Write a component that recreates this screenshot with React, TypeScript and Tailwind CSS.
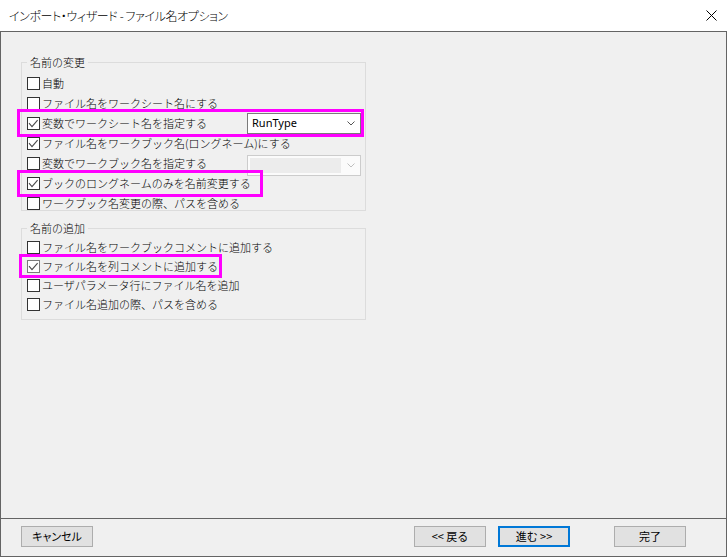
import React from "react";

const FONT = "[font-family:'Noto_Sans_CJK_JP','Noto_Sans',sans-serif]";

function Check({ checked, light }: { checked?: boolean; light?: boolean }) {
  return (
    <span
      className={`mt-[3px] w-[13px] h-[13px] shrink-0 border ${light ? "border-[#7a7a7a]" : "border-[#333333]"} bg-white flex items-center justify-center`}
    >
      {checked && (
        <svg width="11" height="11" viewBox="0 0 11 11">
          <path d="M1 5.2 L4 8.6 L9.6 2.2" fill="none" stroke="#4a4a4a" strokeWidth="1.1" />
        </svg>
      )}
    </span>
  );
}

function Row({
  checked,
  label,
  h = "h-[20px]",
  light,
  children,
}: {
  checked?: boolean;
  label: string;
  h?: string;
  light?: boolean;
  children?: React.ReactNode;
}) {
  return (
    <div className={`flex items-start ${h}`}>
      <Check checked={checked} light={light} />
      <span className="ml-[2px] text-[11px] leading-[18px] font-light text-black whitespace-nowrap">{label}</span>
      {children}
    </div>
  );
}

function Chevron({ color }: { color: string }) {
  return (
    <svg width="8" height="5" viewBox="0 0 8 5">
      <path d="M0.5 0.5 L4 4 L7.5 0.5" fill="none" stroke={color} strokeWidth="1" />
    </svg>
  );
}

export default function App() {
  return (
    <div className={`relative w-[727px] h-[557px] bg-[#f0f0f0] overflow-hidden ${FONT}`}>
      {/* Title bar */}
      <div className="h-[31px] bg-white flex items-center justify-between pl-[9px] pr-[10px]">
        <span className="text-[12px] font-light text-black [font-feature-settings:'palt'] tracking-[-0.4px]">
          インポート・ウィザード - ファイル名オプション
        </span>
        <svg width="11" height="11" viewBox="0 0 11 11" className="mt-[-1px]">
          <path d="M0.5 0.5 L10.5 10.5 M10.5 0.5 L0.5 10.5" stroke="#000" strokeWidth="1" fill="none" />
        </svg>
      </div>

      {/* Frame */}
      <div className="h-[526px] border border-[#646464] flex flex-col">
        {/* Main */}
        <div className="h-[487px] border-b border-[#646464] pl-[20px] pt-[23px] flex flex-col">
          <fieldset className="w-[345px] h-[156px] border border-[#dcdcdc] pl-[5px] pr-[4px] pt-[5px] flex flex-col">
            <legend className="px-[3px] text-[11px] leading-[14px] font-light text-black">名前の変更</legend>
            <Row label="自動" />
            <Row label="ファイル名をワークシート名にする" />
            <Row checked label="変数でワークシート名を指定する">
              <div className="ml-auto mt-[-1px] w-[114px] h-[21px] bg-white border border-[#7a7a7a] flex items-center justify-between pl-[4px] pr-[5px]">
                <span className="text-[11px] [font-family:'Noto_Sans',sans-serif] text-black">RunType</span>
                <Chevron color="#555555" />
              </div>
            </Row>
            <Row checked label="ファイル名をワークブック名(ロングネーム)にする" />
            <Row label="変数でワークブック名を指定する">
              <div className="ml-auto mt-[1px] w-[114px] h-[21px] bg-[#fbfbfb] border border-[#cccccc] flex items-center justify-between pl-[2px] pr-[5px]">
                <div className="w-[91px] h-[15px] bg-[#ececec]" />
                <Chevron color="#bfbfbf" />
              </div>
            </Row>
            <Row checked label="ブックのロングネームのみを名前変更する" />
            <Row label="ワークブック名変更の際、パスを含める" />
          </fieldset>

          <fieldset className="mt-[10px] w-[345px] h-[99px] border border-[#dcdcdc] pl-[5px] pr-[4px] pt-[3px] flex flex-col">
            <legend className="px-[3px] text-[11px] leading-[14px] font-light text-black">名前の追加</legend>
            <Row h="h-[19px]" label="ファイル名をワークブックコメントに追加する" />
            <Row h="h-[19px]" checked light label="ファイル名を列コメントに追加する" />
            <Row h="h-[19px]" label="ユーザパラメータ行にファイル名を追加" />
            <Row h="h-[19px]" label="ファイル名追加の際、パスを含める" />
          </fieldset>
        </div>

        {/* Footer */}
        <div className="flex-1 flex items-start pt-[7px] pl-[20px] pr-[40px]">
          <button className="w-[72px] h-[21px] bg-[#e1e1e1] border border-[#adadad] text-[11px] text-black flex items-center justify-center [font-feature-settings:'palt']">
            キャンセル
          </button>
          <div className="flex-1" />
          <button className="w-[72px] h-[21px] bg-[#e1e1e1] border border-[#adadad] text-[11px] text-black flex items-center justify-center">
            &lt;&lt; 戻る
          </button>
          <button className="ml-[12px] w-[72px] h-[21px] bg-[#e1e1e1] border-2 border-[#0078d7] text-[11px] text-black flex items-center justify-center">
            進む &gt;&gt;
          </button>
          <button className="ml-[44px] w-[72px] h-[21px] bg-[#e1e1e1] border border-[#adadad] text-[11px] text-black flex items-center justify-center">
            完了
          </button>
        </div>
      </div>

      {/* Annotation highlights */}
      <div className="absolute left-[17px] top-[109px] w-[347px] h-[28px] border-[3px] border-[#ff00ff] pointer-events-none" />
      <div className="absolute left-[17px] top-[170px] w-[246px] h-[27px] border-[3px] border-[#ff00ff] pointer-events-none" />
      <div className="absolute left-[19px] top-[254px] w-[203px] h-[24px] border-[3px] border-[#ff00ff] pointer-events-none" />
    </div>
  );
}
